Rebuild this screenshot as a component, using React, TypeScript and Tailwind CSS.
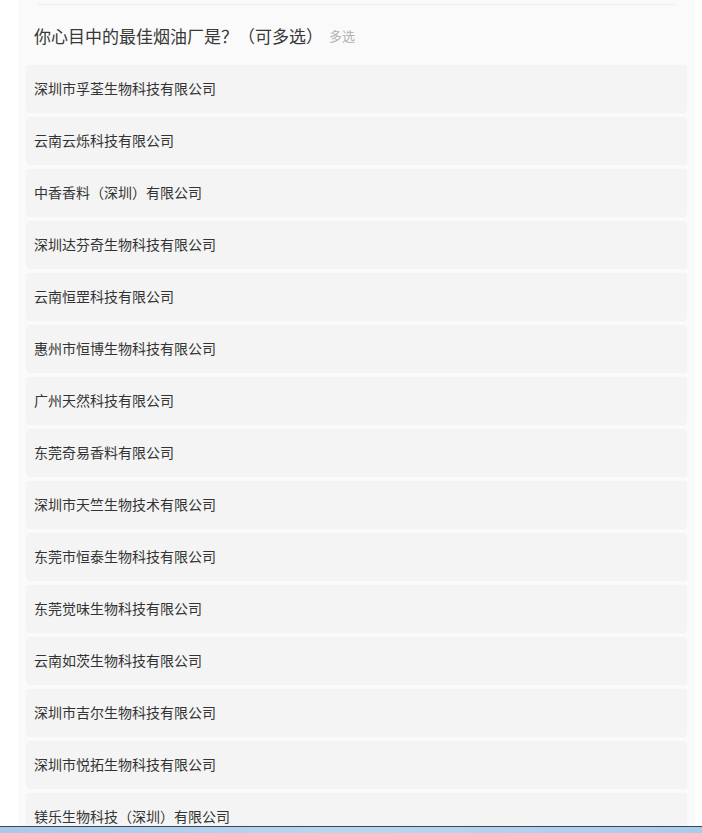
import React from 'react'

const companies = [
  '深圳市孚荃生物科技有限公司',
  '云南云烁科技有限公司',
  '中香香料（深圳）有限公司',
  '深圳达芬奇生物科技有限公司',
  '云南恒罡科技有限公司',
  '惠州市恒博生物科技有限公司',
  '广州天然科技有限公司',
  '东莞奇易香料有限公司',
  '深圳市天竺生物技术有限公司',
  '东莞市恒泰生物科技有限公司',
  '东莞觉味生物科技有限公司',
  '云南如茨生物科技有限公司',
  '深圳市吉尔生物科技有限公司',
  '深圳市悦拓生物科技有限公司',
  '镁乐生物科技（深圳）有限公司',
]

export default function App() {
  return (
    <div
      className="relative min-h-screen bg-white overflow-hidden"
      style={{ fontFamily: '"Noto Sans CJK SC", "Microsoft YaHei", sans-serif' }}
    >
      <div className="ml-[18px] w-[677px] bg-[#fafafa] h-[833px]">
        {/* bottom border of the previous question */}
        <div className="mx-5 h-[5px] border-b border-[#ececec]" />

        <div className="flex items-center px-4 pt-[18px] pb-[16px]">
          <span className="text-[17px] leading-[26px] text-[#383838]">
            你心目中的最佳烟油厂是？（可多选）
          </span>
          <span className="ml-[6px] text-[13px] leading-[26px] text-[#b3b3b3]">多选</span>
        </div>

        <div className="flex flex-col gap-1 px-2">
          {companies.map((name) => (
            <div
              key={name}
              className="flex h-12 shrink-0 items-center rounded bg-[#f4f4f4] px-2 pb-[2px] text-[14px] text-[#333]"
            >
              {name}
            </div>
          ))}
        </div>
      </div>

      <div className="fixed bottom-0 left-0 right-0 h-[7px] border-t border-[#3b4656] bg-gradient-to-r from-[#a8c9ea] via-[#b9d6f0] to-[#a9cbeb]" />
    </div>
  )
}
